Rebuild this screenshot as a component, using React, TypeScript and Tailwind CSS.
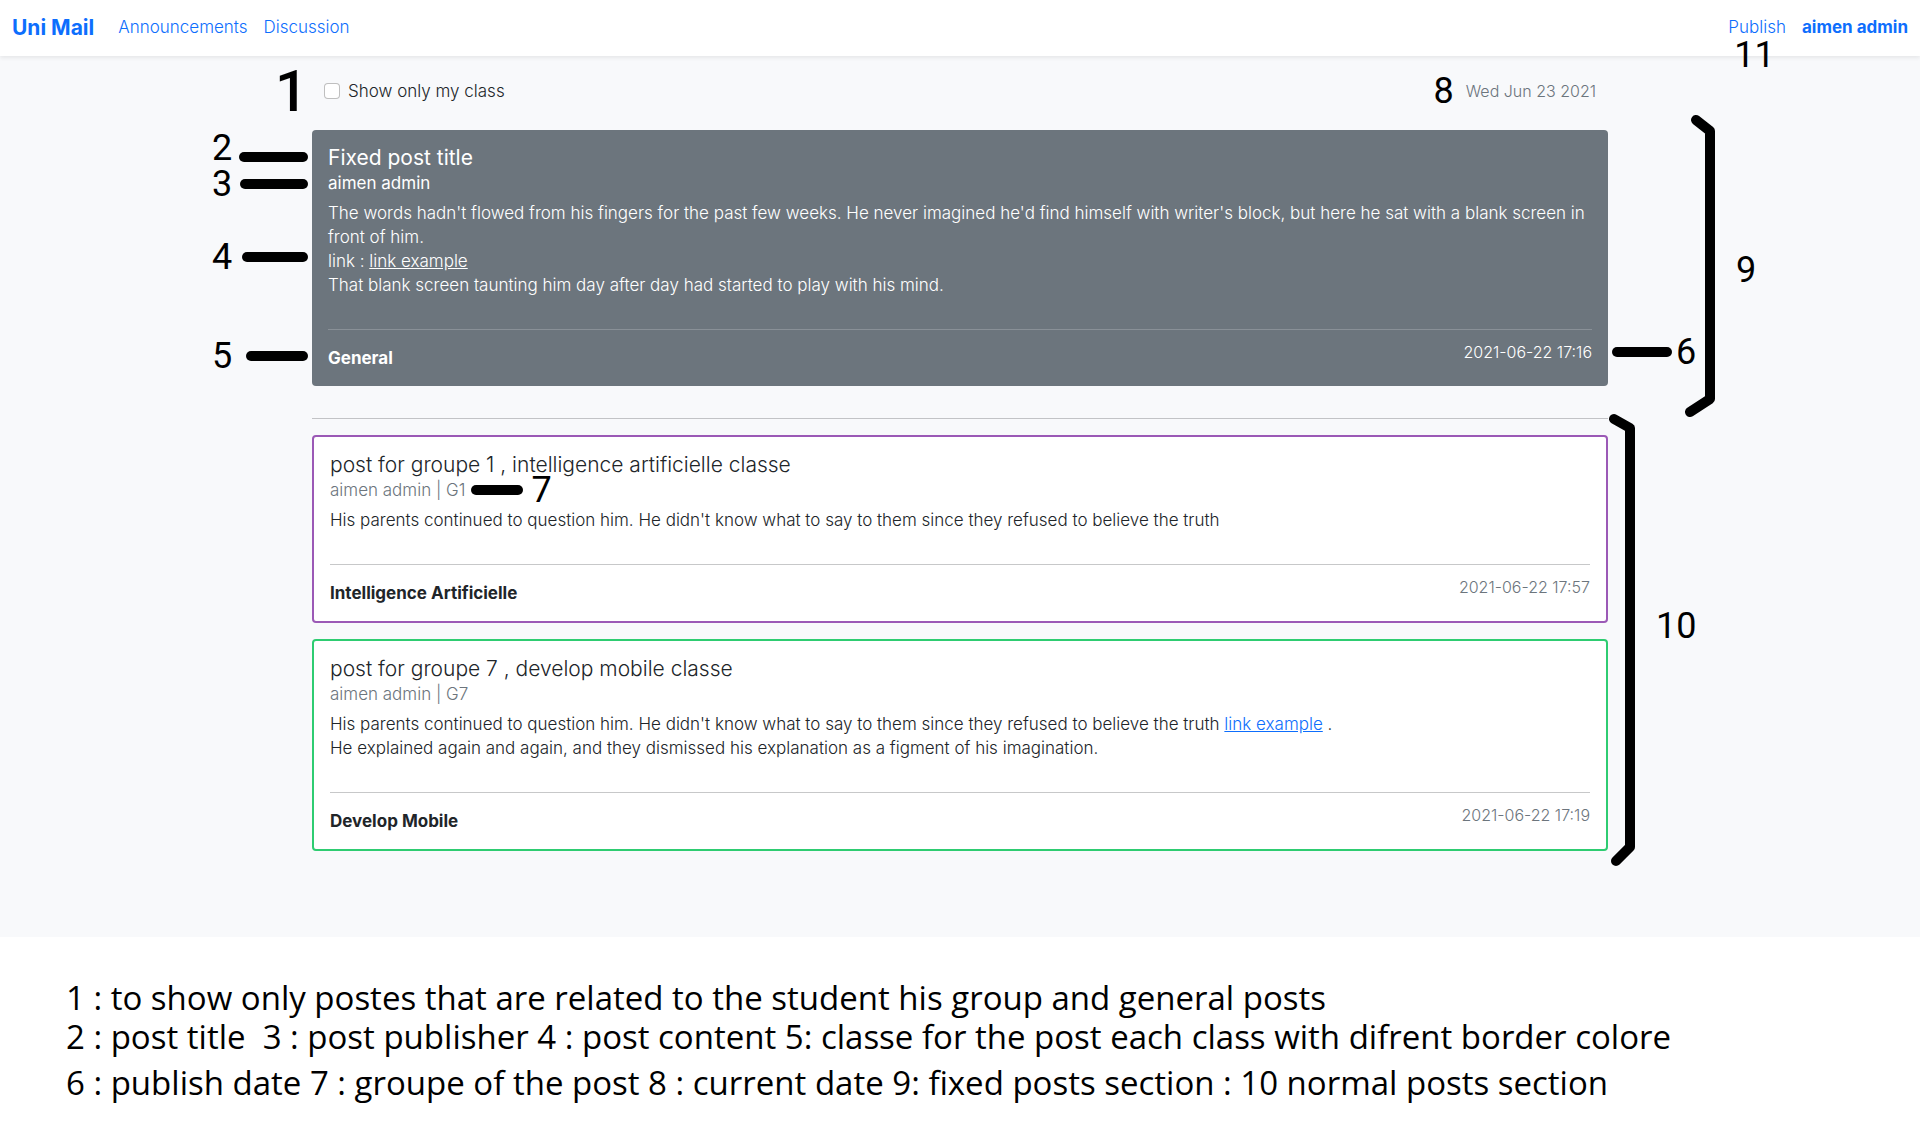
import type { ReactNode } from "react";

function Digits({ children, large = false }: { children: ReactNode; large?: boolean }) {
  return (
    <span
      className={
        large
          ? "block font-['Roboto',sans-serif] text-[58px] font-medium leading-none text-black"
          : "block font-['Roboto',sans-serif] text-[36px] font-normal leading-7 text-black"
      }
    >
      {children}
    </span>
  );
}

function Bar({ className }: { className: string }) {
  return <span className={`block h-2.5 shrink-0 rounded-full bg-black ${className}`} />;
}

/* Numbered pointer that sits in the margin left of a card. */
function LeftCallout({ n, place, bar }: { n: number; place: string; bar: string }) {
  return (
    <div className={`absolute right-full mr-1 flex w-24 justify-between ${place}`}>
      <Digits>{n}</Digits>
      <Bar className={bar} />
    </div>
  );
}

type PostProps = {
  title: string;
  author: string;
  subject: string;
  date: string;
  tone: string;
  muted: string;
  rule: string;
  weight: string;
  authorExtra?: ReactNode;
  children: ReactNode;
  callouts?: ReactNode;
};

function Post({ title, author, subject, date, tone, muted, rule, weight, authorExtra, children, callouts }: PostProps) {
  return (
    <article className={`relative rounded p-4 ${tone}`}>
      <h2 className={`text-[21px] leading-6 ${weight}`}>{title}</h2>
      <div className={`mt-[3px] flex h-5 items-center text-[17px] leading-5 ${weight} ${muted}`}>
        <span>{author}</span>
        {authorExtra}
      </div>
      <div className="mt-2 text-[17px] font-light leading-6">{children}</div>
      <hr className={`mt-8 mb-4 ${rule}`} />
      <footer className="flex justify-between">
        <strong className="text-[17px] font-bold leading-6">{subject}</strong>
        <time className={`text-base font-light leading-3 ${muted}`}>{date}</time>
      </footer>
      {callouts}
    </article>
  );
}

export default function App() {
  return (
    <div className="min-h-screen bg-white font-['Inter',sans-serif] text-[#212529]">
      <div className="bg-[#f8f9fb] pb-[86px]">
        <nav className="flex h-14 items-center justify-between bg-white px-3 text-[17px] text-[#0d6efd] shadow-[0_2px_4px_rgba(0,0,0,0.075)]">
          <div className="flex items-center gap-4">
            <a href="#home" className="mr-2 text-[21px] font-bold">Uni Mail</a>
            <a href="#announcements" className="font-light">Announcements</a>
            <a href="#discussion" className="font-light">Discussion</a>
          </div>
          <div className="flex items-center gap-4">
            <div className="relative">
              <a href="#publish" className="font-light">Publish</a>
              <div className="absolute left-1.5 top-full">
                <Digits>11</Digits>
              </div>
            </div>
            <a href="#account" className="font-bold">aimen admin</a>
          </div>
        </nav>

        <main className="mx-auto max-w-[1296px]">
          <div className="relative flex items-center justify-between px-3 pt-[23px] pb-[27px]">
            <div className="absolute right-full top-1.5 mr-1">
              <Digits large>1</Digits>
            </div>
            <label className="flex items-center gap-2 text-[17px] font-light leading-6">
              <input
                type="checkbox"
                className="size-4 appearance-none rounded border border-black/25 bg-white checked:bg-[#0d6efd]"
              />
              Show only my class
            </label>
            <div className="flex h-6 items-center gap-3">
              <Digits>8</Digits>
              <time className="text-base font-light leading-6 text-[#6c757d]">Wed Jun 23 2021</time>
            </div>
          </div>

          <section className="relative">
            <Post
              title="Fixed post title"
              author="aimen admin"
              subject="General"
              date="2021-06-22 17:16"
              tone="bg-[#6c757d] text-white"
              muted="text-white"
              rule="border-white/20"
              weight="font-normal"
              callouts={
                <>
                  <LeftCallout n={2} place="top-1 items-end" bar="w-[69px]" />
                  <LeftCallout n={3} place="top-10 items-center" bar="w-[68px]" />
                  <LeftCallout n={4} place="top-[113px] items-center" bar="w-[66px]" />
                  <LeftCallout n={5} place="top-[212px] items-center" bar="w-[62px]" />
                  <div className="absolute left-full top-52 ml-1 flex items-center gap-1">
                    <Bar className="w-[60px]" />
                    <Digits>6</Digits>
                  </div>
                </>
              }
            >
              <p>
                The words hadn't flowed from his fingers for the past few weeks. He never imagined he'd find himself with
                writer's block, but here he sat with a blank screen in front of him.
              </p>
              <p>
                link : <a href="#link" className="underline">link example</a>
              </p>
              <p>That blank screen taunting him day after day had started to play with his mind.</p>
            </Post>
            <div className="absolute left-full -top-4 ml-[76px] flex items-center gap-5">
              <svg width="32" height="304" viewBox="0 0 32 304" fill="none" stroke="#000" strokeWidth="10" strokeLinecap="round" strokeLinejoin="round" aria-hidden="true">
                <path d="M12 6L26 17V285L6 298" />
              </svg>
              <div className="pt-2">
                <Digits>9</Digits>
              </div>
            </div>
          </section>

          <hr className="mt-8 mb-4 border-[#212529]/25" />

          <section className="relative flex flex-col gap-4">
            <Post
              title="post for groupe 1 , intelligence artificielle classe"
              author="aimen admin | G1"
              subject="Intelligence Artificielle"
              date="2021-06-22 17:57"
              tone="border-2 border-[#9b59b6] bg-white"
              muted="text-[#6c757d]"
              rule="border-[#212529]/25"
              weight="font-light"
              authorExtra={
                <span className="ml-1.5 flex items-center gap-2">
                  <Bar className="w-[52px]" />
                  <Digits>7</Digits>
                </span>
              }
            >
              <p>His parents continued to question him. He didn't know what to say to them since they refused to believe the truth</p>
            </Post>
            <Post
              title="post for groupe 7 , develop mobile classe"
              author="aimen admin | G7"
              subject="Develop Mobile"
              date="2021-06-22 17:19"
              tone="border-2 border-[#2ecc71] bg-white"
              muted="text-[#6c757d]"
              rule="border-[#212529]/25"
              weight="font-light"
            >
              <p>
                His parents continued to question him. He didn't know what to say to them since they refused to believe the truth{" "}
                <a href="#link" className="text-[#0d6efd] underline">link example</a> .
              </p>
              <p>He explained again and again, and they dismissed his explanation as a figment of his imagination.</p>
            </Post>
            <div className="absolute left-full -top-[22px] flex items-center gap-4">
              <svg width="32" height="454" viewBox="0 0 32 454" fill="none" stroke="#000" strokeWidth="10" strokeLinecap="round" strokeLinejoin="round" aria-hidden="true">
                <path d="M6 6L22 15V434L8 448" />
              </svg>
              <div className="pb-7">
                <Digits>10</Digits>
              </div>
            </div>
          </section>
        </main>
      </div>

      <section className="px-[66px] pt-10 font-['Open_Sans',sans-serif] text-[33px] text-black">
        <p className="leading-[42px]">1 : to show only postes that are related to the student his group and general posts</p>
        <p className="leading-9">
          2 : post title &nbsp;3 : post publisher 4 : post content 5: classe for the post each class with difrent border colore
        </p>
        <p className="mt-2.5 leading-9">
          6 : publish date 7 : groupe of the post 8 : current date 9: fixed posts section : 10 normal posts section
        </p>
      </section>
    </div>
  );
}
